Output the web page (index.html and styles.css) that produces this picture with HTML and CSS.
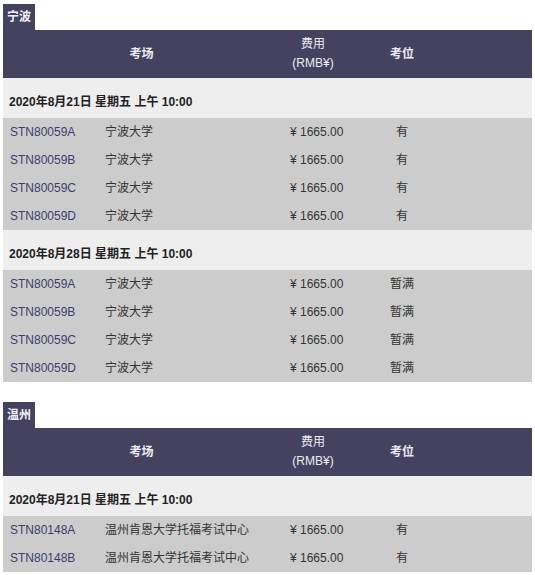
FILE: index.html
```html
<!DOCTYPE html>
<html lang="zh">
<head>
<meta charset="utf-8">
<link rel="stylesheet" href="styles.css">
</head>
<body>
<section class="city">
  <div class="tab">宁波</div>
  <table class="sched">
    <colgroup><col class="c-code"><col class="c-venue"><col class="c-price"><col class="c-seat"><col class="c-rest"></colgroup>
    <thead>
      <tr><th colspan="2">考场</th><th class="fee">费用<br>(RMB¥)</th><th>考位</th><th></th></tr>
    </thead>
    <tbody>
      <tr class="date"><td colspan="5">2020年8月21日 星期五 上午 10:00</td></tr>
      <tr><td class="code">STN80059A</td><td>宁波大学</td><td class="price">¥ 1665.00</td><td class="seat">有</td><td></td></tr>
      <tr><td class="code">STN80059B</td><td>宁波大学</td><td class="price">¥ 1665.00</td><td class="seat">有</td><td></td></tr>
      <tr><td class="code">STN80059C</td><td>宁波大学</td><td class="price">¥ 1665.00</td><td class="seat">有</td><td></td></tr>
      <tr><td class="code">STN80059D</td><td>宁波大学</td><td class="price">¥ 1665.00</td><td class="seat">有</td><td></td></tr>
      <tr class="date"><td colspan="5">2020年8月28日 星期五 上午 10:00</td></tr>
      <tr><td class="code">STN80059A</td><td>宁波大学</td><td class="price">¥ 1665.00</td><td class="seat">暂满</td><td></td></tr>
      <tr><td class="code">STN80059B</td><td>宁波大学</td><td class="price">¥ 1665.00</td><td class="seat">暂满</td><td></td></tr>
      <tr><td class="code">STN80059C</td><td>宁波大学</td><td class="price">¥ 1665.00</td><td class="seat">暂满</td><td></td></tr>
      <tr><td class="code">STN80059D</td><td>宁波大学</td><td class="price">¥ 1665.00</td><td class="seat">暂满</td><td></td></tr>
    </tbody>
  </table>
</section>
<section class="city">
  <div class="tab">温州</div>
  <table class="sched">
    <colgroup><col class="c-code"><col class="c-venue"><col class="c-price"><col class="c-seat"><col class="c-rest"></colgroup>
    <thead>
      <tr><th colspan="2">考场</th><th class="fee">费用<br>(RMB¥)</th><th>考位</th><th></th></tr>
    </thead>
    <tbody>
      <tr class="date"><td colspan="5">2020年8月21日 星期五 上午 10:00</td></tr>
      <tr><td class="code">STN80148A</td><td>温州肯恩大学托福考试中心</td><td class="price">¥ 1665.00</td><td class="seat">有</td><td></td></tr>
      <tr><td class="code">STN80148B</td><td>温州肯恩大学托福考试中心</td><td class="price">¥ 1665.00</td><td class="seat">有</td><td></td></tr>
    </tbody>
  </table>
</section>
</body>
</html>
```
FILE: styles.css
```css
html, body {
  margin: 0;
  padding: 0;
  background: #ffffff;
}
body {
  padding: 4px 3px 0 3px;
  font-family: "Liberation Sans", "Noto Sans CJK SC", sans-serif;
  font-size: 12px;
  color: #333333;
}
.city + .city {
  margin-top: 20px;
}
.tab {
  display: inline-block;
  background: #45425f;
  color: #f2f2fa;
  font-weight: bold;
  font-size: 12px;
  line-height: 26px;
  height: 26px;
  padding: 0 4px;
  vertical-align: top;
}
.sched {
  width: 529px;
  border-collapse: collapse;
  table-layout: fixed;
}
.c-code { width: 102px; }
.c-venue { width: 175px; }
.c-price { width: 66px; }
.c-seat { width: 112px; }
.c-rest { width: 74px; }
.sched th {
  background: #45425f;
  color: #ececf6;
  font-weight: bold;
  font-size: 12px;
  line-height: 19px;
  height: 48px;
  padding: 0;
  text-align: center;
  vertical-align: middle;
}
.sched th.fee {
  font-weight: normal;
}
.sched td {
  background: #cccccc;
  height: 28px;
  padding: 0;
  line-height: 16px;
  vertical-align: middle;
  white-space: nowrap;
}
.sched td.code {
  padding-left: 7px;
  color: #3e3c6b;
}
.sched td.price {
  padding-left: 10px;
}
.sched td.seat {
  text-align: center;
}
.sched tr.date td {
  background: #eeeeee;
  height: 40px;
  box-sizing: border-box;
  padding: 16px 0 8px 6px;
  font-weight: bold;
  color: #222222;
}
```
